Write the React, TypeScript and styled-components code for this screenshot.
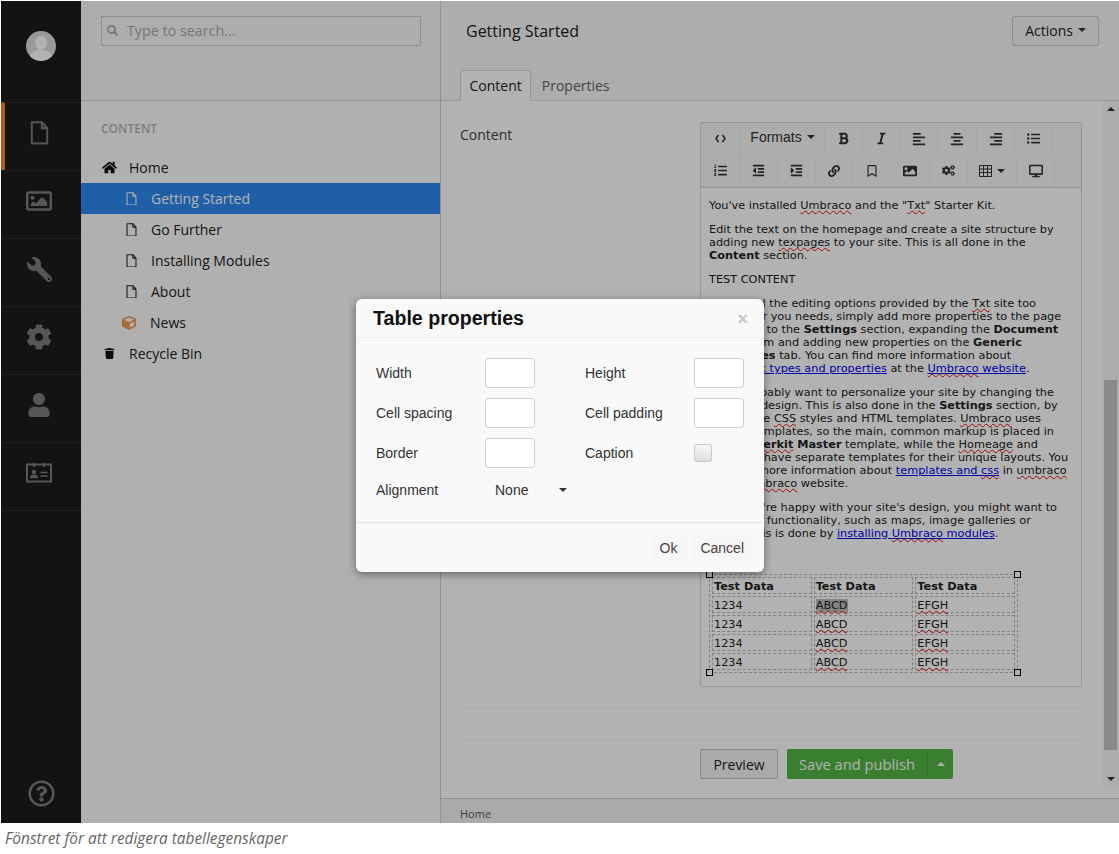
import styled, { createGlobalStyle } from "styled-components";
import type { ReactNode } from "react";
import {
  FaAlignCenter,
  FaAlignLeft,
  FaAlignRight,
  FaBold,
  FaCog,
  FaCogs,
  FaCube,
  FaDesktop,
  FaHome,
  FaImage,
  FaIndent,
  FaItalic,
  FaLink,
  FaListOl,
  FaListUl,
  FaOutdent,
  FaRegBookmark,
  FaRegImage,
  FaRegQuestionCircle,
  FaSearch,
  FaTrash,
  FaUser,
  FaWrench,
} from "react-icons/fa";

const GlobalStyle = createGlobalStyle`
  html, body {
    margin: 0;
    background: #fff;
  }
  * {
    box-sizing: border-box;
  }
`;

const Frame = styled.div`
  position: relative;
  display: flex;
  width: 1118px;
  height: 822px;
  margin: 1px 0 0 1px;
  overflow: hidden;
  background: #fff;
  color: #222;
  font-family: "Open Sans", sans-serif;
  font-size: 14px;
`;

const Backdrop = styled.div`
  position: absolute;
  inset: 0;
  background: rgba(0, 0, 0, 0.3);
`;

const Caption = styled.div`
  padding: 5px 0 0 5px;
  color: #666;
  font-family: "Open Sans", sans-serif;
  font-size: 15.4px;
  font-style: italic;
`;

/* left icon rail */
const Rail = styled.nav`
  display: flex;
  flex-direction: column;
  width: 80px;
  flex-shrink: 0;
  background: #1c1c1c;
  color: #7c7c7c;
`;

const AvatarSlot = styled.div`
  display: flex;
  justify-content: center;
  height: 101px;
  padding-top: 30px;
`;

const Avatar = styled.div`
  width: 30px;
  height: 30px;
  border-radius: 50%;
  background: #dcdcdc;
  overflow: hidden;
`;

const RailItem = styled.div<{ $active?: boolean }>`
  display: flex;
  justify-content: center;
  align-items: center;
  height: 68px;
  padding: 0 8px 7px 0;
  border-top: 1px solid #2c2c2c;
  border-left: 4px solid ${(p) => (p.$active ? "#ff7e24" : "transparent")};
`;

const RailEnd = styled.div`
  border-top: 1px solid #2c2c2c;
`;

const RailHelp = styled.div`
  display: flex;
  justify-content: center;
  margin-top: auto;
  padding-bottom: 16px;
`;

const Wrench = styled(FaWrench)`
  transform: scaleX(-1);
`;

/* tree panel */
const TreePanel = styled.aside`
  display: flex;
  flex-direction: column;
  width: 360px;
  flex-shrink: 0;
  border-right: 1px solid #d2d2d2;
  background: #fdfdfd;
`;

const TreeHeader = styled.div`
  height: 100px;
  padding: 15px 20px;
  border-bottom: 1px solid #d8d8d8;
  background: #f8f8f8;
`;

const Search = styled.div`
  display: flex;
  align-items: center;
  gap: 9px;
  width: 320px;
  height: 30px;
  padding: 0 0 2px 5px;
  border: 1px solid #cfcfcf;
  color: #aaa;
  font-size: 14.3px;
`;

const TreeTitle = styled.div`
  padding: 20px 20px 16px;
  color: #b4b4b4;
  font-size: 12px;
  font-weight: 600;
  line-height: 15px;
`;

const TreeRow = styled.div<{ $depth?: number; $selected?: boolean }>`
  display: flex;
  align-items: center;
  height: 31px;
  padding-left: ${(p) => (p.$depth ? 44 : 20)}px;
  background: ${(p) => (p.$selected ? "#2d89ef" : "transparent")};
  color: ${(p) => (p.$selected ? "#fff" : "#222")};
`;

const TreeIcon = styled.span`
  display: flex;
  justify-content: center;
  align-items: center;
  width: 16px;
  margin-right: 12px;
`;

const NewsIcon = styled(TreeIcon)`
  width: 14px;
  margin-left: -3px;
  margin-right: 14px;
`;

const SubIcon = styled(TreeIcon)`
  width: 11px;
  margin-left: 1px;
  margin-right: 14px;
`;

/* main column */
const Main = styled.main`
  display: flex;
  flex-direction: column;
  flex: 1;
  min-width: 0;
`;

const MainHeader = styled.header`
  height: 100px;
  padding: 15px 20px 0 19px;
  border-bottom: 1px solid #d8d8d8;
  background: #f8f8f8;
`;

const TitleRow = styled.div`
  display: flex;
  justify-content: space-between;
  align-items: center;
  height: 30px;
`;

const PageTitle = styled.h1`
  margin: 0 0 0 6px;
  color: #222;
  font-size: 16px;
  font-weight: 400;
`;

const ActionsButton = styled.div`
  display: flex;
  align-items: center;
  gap: 5px;
  height: 30px;
  padding: 0 12px 2px;
  border: 1px solid #cfcfcf;
  border-radius: 2px;
  background: #f4f4f4;
`;

const Caret = styled.span<{ $up?: boolean; $color?: string }>`
  display: inline-block;
  width: 0;
  height: 0;
  border-left: 4px solid transparent;
  border-right: 4px solid transparent;
  ${(p) =>
    p.$up
      ? `border-bottom: 4px solid ${p.$color ?? "#333"};`
      : `border-top: 4px solid ${p.$color ?? "#333"};`}
`;

const Tabs = styled.div`
  display: flex;
  margin-top: 24px;
`;

const Tab = styled.div<{ $active?: boolean }>`
  display: flex;
  align-items: center;
  height: 31px;
  padding: 0 8.5px 2px;
  margin-right: 1px;
  border: 1px solid ${(p) => (p.$active ? "#d8d8d8" : "transparent")};
  border-bottom: 0;
  border-radius: 3px 3px 0 0;
  background: ${(p) => (p.$active ? "#fff" : "transparent")};
  color: ${(p) => (p.$active ? "#222" : "#666")};
`;

const MainBody = styled.div`
  display: flex;
  flex: 1;
  min-height: 0;
`;

const Scroller = styled.div`
  flex: 1;
  min-width: 0;
  padding: 21px 21px 0 19px;
`;

const PropertyRow = styled.div`
  display: grid;
  grid-template-columns: 240px 382px;
`;

const PropertyLabel = styled.div`
  padding-top: 3px;
  color: #444;
`;

const Editor = styled.div`
  height: 565px;
  border: 1px solid #d8d8d8;
  border-radius: 2px;
`;

const Toolbar = styled.div`
  height: 65px;
  border-bottom: 1px solid #d8d8d8;
  background: #f8f8f8;
`;

const ToolRow = styled.div`
  display: flex;
  height: 32px;
`;

const ToolButton = styled.div<{ $w: number }>`
  display: flex;
  justify-content: center;
  align-items: center;
  gap: 5px;
  width: ${(p) => p.$w}px;
  border-right: 1px solid #f0f0f0;
  border-bottom: 1px solid #f0f0f0;
  color: #333;
`;

const FormatsLabel = styled.span`
  display: flex;
  align-items: center;
  gap: 5px;
  margin: 0 0 3px 1px;
  font-family: "Liberation Sans", Arial, sans-serif;
  font-size: 14px;
`;

const EditorBody = styled.div`
  position: relative;
  padding: 11px 8px;
  color: #222;
  font-family: "DejaVu Sans", Verdana, sans-serif;
  font-size: 11.3px;
  line-height: 13px;

  p {
    margin: 0 0 11px;
    white-space: nowrap;
  }

  a {
    color: #0000ee;
    text-decoration: underline;
  }
`;

const EmptyLine = styled.div`
  height: 23px;
`;

const Spell = styled.span`
  text-decoration: underline wavy #e01010;
  text-decoration-thickness: 1px;
  text-decoration-skip-ink: none;
  text-underline-offset: 1px;
`;

const TableWrap = styled.div`
  position: relative;
  width: 309px;
`;

const DataTable = styled.table`
  width: 309px;
  table-layout: fixed;
  border: 1px dashed #bbb;
  border-collapse: separate;
  border-spacing: 2px;

  th,
  td {
    height: 17px;
    padding: 1px 1px 0;
    border: 1px dashed #bbb;
    text-align: left;
  }
`;

const Selected = styled.span`
  background: #bdbdbd;
`;

const Handle = styled.span<{ $x: "left" | "right"; $y: "top" | "bottom" }>`
  position: absolute;
  ${(p) => p.$x}: -3px;
  ${(p) => p.$y}: -3px;
  width: 7px;
  height: 7px;
  border: 1px solid #000;
  background: #fff;
`;

const Divider = styled.div<{ $gap: number }>`
  margin-top: ${(p) => p.$gap}px;
  border-top: 1px solid #f4f4f4;
`;

const ActionsRow = styled.div`
  display: flex;
  gap: 9px;
  margin: 9px 0 0 240px;
`;

const PreviewButton = styled.div`
  display: flex;
  justify-content: center;
  align-items: center;
  width: 78px;
  height: 30px;
  border: 1px solid #c8c8c8;
  border-radius: 2px;
  background: #f4f4f4;
`;

const SaveGroup = styled.div`
  display: flex;
  height: 30px;
  border-radius: 2px;
  background: #53b544;
  color: #fff;
  font-size: 14.7px;
`;

const SaveLabel = styled.div`
  display: flex;
  justify-content: center;
  align-items: center;
  width: 141px;
  border-right: 1px solid #4aa33c;
`;

const SaveCaret = styled.div`
  display: flex;
  align-items: center;
  justify-content: center;
  width: 25px;
`;

const Scrollbar = styled.div`
  display: flex;
  flex-direction: column;
  align-items: center;
  width: 16px;
  height: 687px;
  padding: 6px 1px 0 0;
  background: #f6f6f6;
`;

const ScrollThumb = styled.div`
  width: 13px;
  height: 370px;
  margin-top: 269px;
  margin-bottom: 27px;
  background: #c4c4c4;
`;

const Footer = styled.footer`
  display: flex;
  align-items: center;
  height: 25px;
  padding: 5px 0 0 19px;
  border-top: 1px solid #d2d2d2;
  background: #f4f4f4;
  color: #555;
  font-size: 11px;
`;

/* dialog */
const Dialog = styled.div`
  position: absolute;
  left: 355px;
  top: 298px;
  width: 408px;
  height: 273px;
  border-radius: 6px;
  background: #f9f9f9;
  box-shadow: 0 2px 8px rgba(0, 0, 0, 0.45);
  color: #333;
  font-family: "Liberation Sans", Arial, sans-serif;
  font-size: 14px;
`;

const DialogHeader = styled.div`
  display: flex;
  justify-content: space-between;
  align-items: center;
  height: 39px;
  padding: 0 16px 0 17px;
  border-bottom: 1px solid #eee;
`;

const DialogTitle = styled.h2`
  margin: 0;
  color: #111;
  font-size: 19.6px;
  font-weight: 700;
`;

const CloseMark = styled.span`
  color: #c8c8c8;
  font-size: 18px;
  font-weight: 700;
  padding-top: 2px;
`;

const DialogBody = styled.div`
  display: grid;
  grid-template-columns: 109px 50px 50px 109px 50px;
  grid-auto-rows: 30px;
  row-gap: 10px;
  height: 185px;
  padding: 20px 0 0 20px;
  border-bottom: 1px solid #e4e4e4;
  align-items: center;
`;

const FieldLabel = styled.label<{ $second?: boolean }>`
  grid-column: ${(p) => (p.$second ? 4 : 1)};
`;

const FieldInput = styled.div<{ $second?: boolean }>`
  grid-column: ${(p) => (p.$second ? 5 : 2)};
  width: 50px;
  height: 30px;
  border: 1px solid #d0d0d0;
  border-radius: 3px;
  background: #fff;
`;

const CheckBox = styled.div`
  grid-column: 5;
  width: 18px;
  height: 18px;
  border: 1px solid #c8c8c8;
  border-radius: 3px;
  background: linear-gradient(#f8f8f8, #dedede);
`;

const AlignSelect = styled.div`
  grid-column: 2 / span 2;
  display: flex;
  justify-content: space-between;
  align-items: center;
  width: 82px;
  margin-top: -6px;
  padding-left: 10px;
`;

const AlignLabel = styled(FieldLabel)`
  margin-top: -6px;
`;

const DialogFooter = styled.div`
  display: flex;
  justify-content: flex-end;
  gap: 5px;
  padding: 12px 11px 0 0;
`;

const DialogButton = styled.div`
  display: flex;
  align-items: center;
  height: 25px;
  padding: 0 9px;
  border-radius: 3px;
  background: #f6f6f6;
  box-shadow: 0 0 1px #e8e8e8;
  color: #444;
`;

function DocIcon({ size }: { size: number }) {
  return (
    <svg width={size} height={size * 1.25} viewBox="0 0 16 20" fill="none" stroke="currentColor" strokeWidth={size > 14 ? 1.7 : 1.5}>
      <path d="M1.5 1h8.500l4.500 5v13h-13z" strokeLinejoin="round" />
      <path d="M10 1v5h4.500" strokeLinejoin="round" />
    </svg>
  );
}

function AvatarFace() {
  return (
    <svg width="30" height="30" viewBox="0 0 30 30" fill="#fff">
      <ellipse cx="15" cy="12" rx="6" ry="7" />
      <path d="M3 30c0-8 5-10 9-11h6c4 1 9 3 9 11z" />
    </svg>
  );
}

function IdCard() {
  return (
    <svg width="26" height="20" viewBox="0 0 26 20" fill="none" stroke="currentColor">
      <path d="M1 1.500h24v17H1z" strokeWidth="2" />
      <path d="M8 0v4M18 0v4" strokeWidth="2" />
      <circle cx="8" cy="9" r="2.200" fill="currentColor" stroke="none" />
      <path d="M4 15c0-3 2-3.500 4-3.500s4 .5 4 3.500z" fill="currentColor" stroke="none" />
      <path d="M14.500 9.500h7M14.500 13h7" strokeWidth="1.500" />
    </svg>
  );
}

function CodeMark() {
  return (
    <svg width="11" height="9" viewBox="0 0 11 9" fill="none" stroke="currentColor" strokeWidth="1.500">
      <path d="M3.500 1 1 4.500 3.500 8M7.500 1 10 4.500 7.500 8" />
    </svg>
  );
}

function GridIcon() {
  return (
    <svg width="13" height="12" viewBox="0 0 13 12" fill="none" stroke="currentColor">
      <path d="M.5.500h12v11H.5zM.5 4h12M.5 7.500h12M4.500.5v11M8.500.5v11" />
    </svg>
  );
}

function Tool({ w, children }: { w: number; children: ReactNode }) {
  return <ToolButton $w={w}>{children}</ToolButton>;
}

const tableRows = [0, 1, 2, 3];

export default function App() {
  return (
    <>
      <GlobalStyle />
      <Frame>
        <Rail>
          <AvatarSlot>
            <Avatar>
              <AvatarFace />
            </Avatar>
          </AvatarSlot>
          <RailItem $active>
            <DocIcon size={19} />
          </RailItem>
          <RailItem>
            <FaRegImage size={26} />
          </RailItem>
          <RailItem>
            <Wrench size={25} />
          </RailItem>
          <RailItem>
            <FaCog size={26} />
          </RailItem>
          <RailItem>
            <FaUser size={24} />
          </RailItem>
          <RailItem>
            <IdCard />
          </RailItem>
          <RailEnd />
          <RailHelp>
            <FaRegQuestionCircle size={27} />
          </RailHelp>
        </Rail>

        <TreePanel>
          <TreeHeader>
            <Search>
              <FaSearch size={11} color="#aaa" />
              <span>Type to search...</span>
            </Search>
          </TreeHeader>
          <TreeTitle>CONTENT</TreeTitle>
          <TreeRow>
            <TreeIcon>
              <FaHome size={15} color="#111" />
            </TreeIcon>
            Home
          </TreeRow>
          <TreeRow $depth={1} $selected>
            <SubIcon>
              <DocIcon size={11} />
            </SubIcon>
            Getting Started
          </TreeRow>
          <TreeRow $depth={1}>
            <SubIcon>
              <DocIcon size={11} />
            </SubIcon>
            Go Further
          </TreeRow>
          <TreeRow $depth={1}>
            <SubIcon>
              <DocIcon size={11} />
            </SubIcon>
            Installing Modules
          </TreeRow>
          <TreeRow $depth={1}>
            <SubIcon>
              <DocIcon size={11} />
            </SubIcon>
            About
          </TreeRow>
          <TreeRow $depth={1}>
            <NewsIcon>
              <FaCube size={14} color="#f09a50" />
            </NewsIcon>
            News
          </TreeRow>
          <TreeRow>
            <TreeIcon>
              <FaTrash size={11} color="#111" />
            </TreeIcon>
            Recycle Bin
          </TreeRow>
        </TreePanel>

        <Main>
          <MainHeader>
            <TitleRow>
              <PageTitle>Getting Started</PageTitle>
              <ActionsButton>
                Actions <Caret />
              </ActionsButton>
            </TitleRow>
            <Tabs>
              <Tab $active>Content</Tab>
              <Tab>Properties</Tab>
            </Tabs>
          </MainHeader>

          <MainBody>
            <Scroller>
              <PropertyRow>
                <PropertyLabel>Content</PropertyLabel>
                <Editor>
                  <Toolbar>
                    <ToolRow>
                      <Tool w={39}><CodeMark /></Tool>
                      <Tool w={85}><FormatsLabel>Formats <Caret /></FormatsLabel></Tool>
                      <Tool w={38}><FaBold size={13} /></Tool>
                      <Tool w={37}><FaItalic size={13} /></Tool>
                      <Tool w={38}><FaAlignLeft size={14} /></Tool>
                      <Tool w={39}><FaAlignCenter size={14} /></Tool>
                      <Tool w={38}><FaAlignRight size={14} /></Tool>
                      <Tool w={37}><FaListUl size={13} /></Tool>
                    </ToolRow>
                    <ToolRow>
                      <Tool w={39}><FaListOl size={13} /></Tool>
                      <Tool w={38}><FaOutdent size={13} /></Tool>
                      <Tool w={38}><FaIndent size={13} /></Tool>
                      <Tool w={37}><FaLink size={12} /></Tool>
                      <Tool w={38}><FaRegBookmark size={12} /></Tool>
                      <Tool w={39}><FaImage size={14} /></Tool>
                      <Tool w={38}><FaCogs size={13} /></Tool>
                      <Tool w={49}><GridIcon /><Caret /></Tool>
                      <Tool w={38}><FaDesktop size={14} /></Tool>
                    </ToolRow>
                  </Toolbar>
                  <EditorBody>
                    <p>You've installed <Spell>Umbraco</Spell> and the "<Spell>Txt</Spell>" Starter Kit.</p>
                    <p>
                      Edit the text on the homepage and create a site structure by<br />
                      adding new <Spell>texpages</Spell> to your site. This is all done in the<br />
                      <b>Content</b> section.
                    </p>
                    <p>TEST CONTENT</p>
                    <p>
                      If you find the editing options provided by the <Spell>Txt</Spell> site too<br />
                      limited for you needs, simply add more properties to the page<br />
                      types. Go to the <b>Settings</b> section, expanding the <b>Document</b><br />
                      <b>Types</b> item and adding new properties on the <b>Generic</b><br />
                      <b>Properties</b> tab. You can find more information about<br />
                      <a href="#types">document types and properties</a> at the <a href="#site"><Spell>Umbraco</Spell> website</a>.
                    </p>
                    <p>
                      You'll probably want to personalize your site by changing the<br />
                      look and design. This is also done in the <b>Settings</b> section, by<br />
                      editing the <Spell>CSS</Spell> styles and HTML templates. <Spell>Umbraco</Spell> uses<br />
                      master templates, so the main, common markup is placed in<br />
                      the <b><Spell>Starterkit</Spell> Master</b> template, while the <Spell>Homeage</Spell> and<br />
                      Textpage have separate templates for their unique layouts. You<br />
                      can find more information about <a href="#css">templates and <Spell>css</Spell></a> in <Spell>umbraco</Spell><br />
                      at the <Spell>Umbraco</Spell> website.
                    </p>
                    <p>
                      Once you're happy with your site's design, you might want to<br />
                      add more functionality, such as maps, image galleries or<br />
                      forms. This is done by <a href="#mods">installing <Spell>Umbraco</Spell> modules</a>.
                    </p>
                    <EmptyLine />
                    <TableWrap>
                      <DataTable>
                        <thead>
                          <tr>
                            <th>Test Data</th>
                            <th>Test Data</th>
                            <th>Test Data</th>
                          </tr>
                        </thead>
                        <tbody>
                          {tableRows.map((row) => (
                            <tr key={row}>
                              <td>1234</td>
                              <td>
                                {row === 0 ? (
                                  <Selected><Spell>ABCD</Spell></Selected>
                                ) : (
                                  <Spell>ABCD</Spell>
                                )}
                              </td>
                              <td><Spell>EFGH</Spell></td>
                            </tr>
                          ))}
                        </tbody>
                      </DataTable>
                      <Handle $x="left" $y="top" />
                      <Handle $x="right" $y="top" />
                      <Handle $x="left" $y="bottom" />
                      <Handle $x="right" $y="bottom" />
                    </TableWrap>
                  </EditorBody>
                </Editor>
              </PropertyRow>
              <Divider $gap={21} />
              <Divider $gap={30} />
              <ActionsRow>
                <PreviewButton>Preview</PreviewButton>
                <SaveGroup>
                  <SaveLabel>Save and publish</SaveLabel>
                  <SaveCaret>
                    <Caret $up $color="#fff" />
                  </SaveCaret>
                </SaveGroup>
              </ActionsRow>
            </Scroller>
            <Scrollbar>
              <Caret $up />
              <ScrollThumb />
              <Caret />
            </Scrollbar>
          </MainBody>

          <Footer>Home</Footer>
        </Main>

        <Backdrop />

        <Dialog>
          <DialogHeader>
            <DialogTitle>Table properties</DialogTitle>
            <CloseMark>×</CloseMark>
          </DialogHeader>
          <DialogBody>
            <FieldLabel>Width</FieldLabel>
            <FieldInput />
            <FieldLabel $second>Height</FieldLabel>
            <FieldInput $second />
            <FieldLabel>Cell spacing</FieldLabel>
            <FieldInput />
            <FieldLabel $second>Cell padding</FieldLabel>
            <FieldInput $second />
            <FieldLabel>Border</FieldLabel>
            <FieldInput />
            <FieldLabel $second>Caption</FieldLabel>
            <CheckBox />
            <AlignLabel>Alignment</AlignLabel>
            <AlignSelect>
              None <Caret />
            </AlignSelect>
          </DialogBody>
          <DialogFooter>
            <DialogButton>Ok</DialogButton>
            <DialogButton>Cancel</DialogButton>
          </DialogFooter>
        </Dialog>
      </Frame>
      <Caption>Fönstret för att redigera tabellegenskaper</Caption>
    </>
  );
}
